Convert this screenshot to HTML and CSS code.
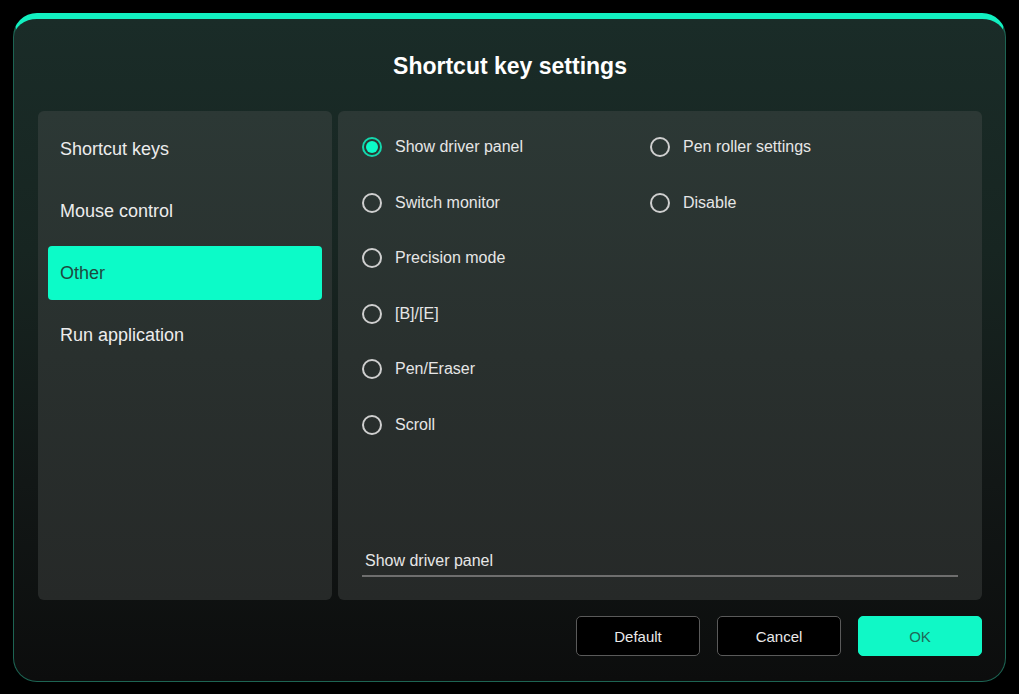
FILE: index.html
```html
<!DOCTYPE html>
<html>
<head>
<meta charset="utf-8">
<link rel="stylesheet" href="styles.css">
</head>
<body>
<div class="dialog">
  <h1 class="title">Shortcut key settings</h1>
  <div class="panels">
    <nav class="nav">
      <div class="nav-item">Shortcut keys</div>
      <div class="nav-item">Mouse control</div>
      <div class="nav-item active">Other</div>
      <div class="nav-item">Run application</div>
    </nav>
    <section class="content">
      <div class="options">
        <div class="opt"><span class="radio checked"></span><span>Show driver panel</span></div>
        <div class="opt"><span class="radio"></span><span>Pen roller settings</span></div>
        <div class="opt"><span class="radio"></span><span>Switch monitor</span></div>
        <div class="opt"><span class="radio"></span><span>Disable</span></div>
        <div class="opt"><span class="radio"></span><span>Precision mode</span></div>
        <div class="opt empty"></div>
        <div class="opt"><span class="radio"></span><span>[B]/[E]</span></div>
        <div class="opt empty"></div>
        <div class="opt"><span class="radio"></span><span>Pen/Eraser</span></div>
        <div class="opt empty"></div>
        <div class="opt"><span class="radio"></span><span>Scroll</span></div>
      </div>
      <div class="field">Show driver panel</div>
    </section>
  </div>
  <div class="buttons">
    <button class="btn">Default</button>
    <button class="btn">Cancel</button>
    <button class="btn primary">OK</button>
  </div>
</div>
</body>
</html>
```

FILE: styles.css
```css
html, body {
  margin: 0;
  padding: 0;
  background: #000;
  width: 1019px;
  height: 694px;
  overflow: hidden;
}
body {
  padding: 13px 0 0 13px;
  box-sizing: border-box;
  font-family: "Liberation Sans", Arial, sans-serif;
}
.dialog {
  width: 993px;
  height: 669px;
  box-sizing: border-box;
  border: 1px solid #1d6453;
  border-top: 6px solid #12f0c0;
  border-radius: 24px;
  background: linear-gradient(180deg, #1a2c28 0%, #172521 35%, #121716 70%, #0c0d0d 100%);
  padding: 35px 23px 25px 24px;
  display: flex;
  flex-direction: column;
}
.title {
  margin: 0;
  height: 24px;
  line-height: 24px;
  font-size: 23px;
  font-weight: bold;
  color: #fff;
  text-align: center;
}
.panels {
  margin-top: 33px;
  height: 490px;
  display: flex;
  gap: 6px;
}
.nav {
  width: 294px;
  box-sizing: border-box;
  border-radius: 6px;
  background: linear-gradient(180deg, #2c3835 0%, #29302e 50%, #262928 100%);
  padding: 11px 10px;
  display: flex;
  flex-direction: column;
  gap: 8px;
}
.nav-item {
  height: 54px;
  line-height: 55px;
  padding-left: 12px;
  font-size: 18px;
  color: #ececec;
  border-radius: 4px;
}
.nav-item.active {
  background: #0cfbc8;
  color: #1c4a3f;
}
.content {
  flex: 1;
  box-sizing: border-box;
  border-radius: 6px;
  background: linear-gradient(180deg, #2c3835 0%, #29302e 50%, #262928 100%);
  padding: 26px 24px 23px 24px;
  display: flex;
  flex-direction: column;
}
.options {
  display: grid;
  grid-template-columns: 288px 1fr;
  row-gap: 35.5px;
  flex: 1;
  align-content: start;
}
.opt {
  height: 20px;
  display: flex;
  align-items: center;
  gap: 13px;
  font-size: 16px;
  color: #e6e6e6;
}
.radio {
  width: 20px;
  height: 20px;
  box-sizing: border-box;
  border: 2px solid #cfcfcf;
  border-radius: 50%;
  flex: none;
  display: flex;
  align-items: center;
  justify-content: center;
}
.radio.checked {
  border-color: #14d7ad;
}
.radio.checked::after {
  content: "";
  width: 12px;
  height: 12px;
  border-radius: 50%;
  background: #0cfbc8;
}
.field {
  border-bottom: 2px solid #6e6e6e;
  font-size: 16px;
  color: #e6e6e6;
  padding: 0 0 4px 3px;
  line-height: 20px;
}
.buttons {
  margin-top: 16px;
  display: flex;
  justify-content: flex-end;
  gap: 17px;
}
.btn {
  width: 124px;
  height: 40px;
  box-sizing: border-box;
  background: #000;
  border: 1px solid #5a5a5a;
  border-radius: 5px;
  color: #eaeaea;
  font-family: "Liberation Sans", Arial, sans-serif;
  font-size: 15px;
}
.btn.primary {
  background: #10f8c6;
  border-color: #10f8c6;
  color: #1f6a58;
}
```
